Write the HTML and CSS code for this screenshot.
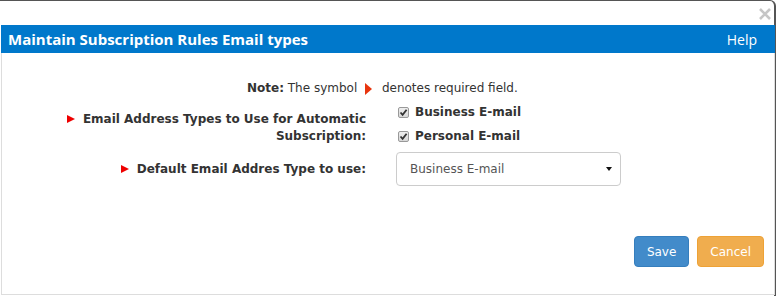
FILE: index.html
```html
<!DOCTYPE html>
<html lang="en">
<head>
    <meta charset="UTF-8">
    <title>Maintain Subscription Rules Email types</title>
    <link rel="stylesheet" href="styles.css">
</head>
<body>
    <div class="modal">
        <div class="close"><svg width="12" height="12" viewBox="0 0 12 12"><path d="M1 1 L11 11 M11 1 L1 11" stroke="#c6c6c6" stroke-width="2.6"/></svg></div>
        <div class="panel">
            <div class="panel-head">
                <span class="title">Maintain Subscription Rules Email types</span>
                <span class="help">Help</span>
            </div>
            <div class="panel-body">
                <div class="note"><b>Note:</b> The symbol <span class="req-big"></span> denotes required field.</div>

                <div class="form-row">
                    <div class="label label-two"><span class="req"></span>Email Address Types to Use for Automatic Subscription:</div>
                    <div class="value">
                        <div class="check"><span class="box"><svg width="9" height="9" viewBox="0 0 9 9"><path d="M1.5 4.5 L3.6 6.8 L7.6 1.8" fill="none" stroke="#333" stroke-width="1.8"/></svg></span>Business E-mail</div>
                        <div class="check"><span class="box"><svg width="9" height="9" viewBox="0 0 9 9"><path d="M1.5 4.5 L3.6 6.8 L7.6 1.8" fill="none" stroke="#333" stroke-width="1.8"/></svg></span>Personal E-mail</div>
                    </div>
                </div>

                <div class="form-row select-row">
                    <div class="label"><span class="req"></span>Default Email Addres Type to use:</div>
                    <div class="value">
                        <div class="select">Business E-mail<span class="caret"></span></div>
                    </div>
                </div>

                <div class="actions">
                    <button class="btn btn-save">Save</button>
                    <button class="btn btn-cancel">Cancel</button>
                </div>
            </div>
        </div>
    </div>
</body>
</html>
```

FILE: styles.css
```css
html, body {
    margin: 0;
    padding: 0;
    background-color: #fff;
}
body {
    font-family: "DejaVu Sans", Verdana, sans-serif;
    font-size: 12px;
    color: #333;
}
.modal {
    position: relative;
    width: 776px;
    height: 296px;
    border-top: 1px solid #555;
    border-right: 2px solid #555;
    border-top-right-radius: 6px;
    background: #fff;
    padding-top: 24px;
    box-sizing: border-box;
}
.close {
    position: absolute;
    top: 7px;
    right: 3px;
    line-height: 0;
}
.panel {
    margin-left: 1px;
    width: 774px;
    height: 270px;
    border: 1px solid #ddd;
    border-top: none;
    box-sizing: border-box;
}
.panel-head {
    display: flex;
    justify-content: space-between;
    align-items: center;
    height: 28px;
    margin: 0 -1px;
    padding: 0 18px 0 7px;
    background-color: #0078cb;
    color: #fff;
    font-family: "Open Sans", "Liberation Sans", sans-serif;
    font-size: 15px;
    font-weight: bold;
}
.help {
    font-weight: normal;
    font-size: 14px;
}
.panel-body {
    padding-top: 27px;
}
.note {
    padding-left: 245px;
    line-height: 16px;
}
.note b {
    font-weight: bold;
}
.req-big {
    display: inline-block;
    width: 0;
    height: 0;
    margin: 0 6px 0 4px;
    border-top: 6px solid transparent;
    border-bottom: 6px solid transparent;
    border-left: 7px solid #e8350e;
    vertical-align: -3px;
}
.form-row {
    display: grid;
    grid-template-columns: 364px 1fr;
    column-gap: 30px;
    margin-top: 9px;
}
.label {
    text-align: right;
    font-weight: bold;
    line-height: 17px;
    padding-left: 60px;
}
.label-two {
    padding-top: 6px;
}
.req {
    display: inline-block;
    width: 0;
    height: 0;
    margin-right: 8px;
    border-top: 4px solid transparent;
    border-bottom: 4px solid transparent;
    border-left: 8px solid #e00;
}
.check {
    display: flex;
    align-items: center;
    font-weight: bold;
    line-height: 24px;
    margin-left: 2px;
}
.check:first-child {
    margin-top: -5px;
}
.box {
    display: flex;
    align-items: center;
    justify-content: center;
    width: 11px;
    height: 11px;
    margin-right: 6px;
    border: 1px solid #999;
    border-radius: 2px;
    background: linear-gradient(#eee, #d8d8d8);
    box-sizing: border-box;
}
.select-row {
    margin-top: 4px;
    align-items: center;
}
.select {
    display: flex;
    justify-content: space-between;
    align-items: center;
    width: 225px;
    height: 34px;
    padding: 0 8px 0 13px;
    border: 1px solid #ccc;
    border-radius: 4px;
    color: #555;
    box-sizing: border-box;
}
.caret {
    width: 0;
    height: 0;
    border-left: 3px solid transparent;
    border-right: 3px solid transparent;
    border-top: 4px solid #111;
}
.actions {
    display: flex;
    justify-content: flex-end;
    gap: 8px;
    padding-right: 10px;
    margin-top: 50px;
}
.btn {
    height: 31px;
    padding: 0 12px;
    border-radius: 4px;
    color: #fff;
    font-family: "DejaVu Sans", Verdana, sans-serif;
    font-size: 12px;
    cursor: pointer;
}
.btn-save {
    background-color: #428bca;
    border: 1px solid #357ebd;
}
.btn-cancel {
    background-color: #f0ad4e;
    border: 1px solid #eea236;
}
```
